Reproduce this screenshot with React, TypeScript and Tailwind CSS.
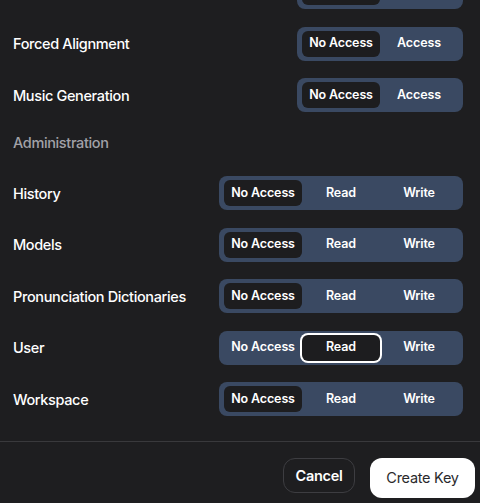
import { clsx } from 'clsx';

type Perm = {
  label: string;
  options: string[];
  selected: number;
  focused?: boolean;
};

const aiRows: Perm[] = [
  { label: 'Voice Isolation', options: ['No Access', 'Access'], selected: 0 },
  { label: 'Forced Alignment', options: ['No Access', 'Access'], selected: 0 },
  { label: 'Music Generation', options: ['No Access', 'Access'], selected: 0 },
];

const adminRows: Perm[] = [
  { label: 'History', options: ['No Access', 'Read', 'Write'], selected: 0 },
  { label: 'Models', options: ['No Access', 'Read', 'Write'], selected: 0 },
  { label: 'Pronunciation Dictionaries', options: ['No Access', 'Read', 'Write'], selected: 0 },
  { label: 'User', options: ['No Access', 'Read', 'Write'], selected: 1, focused: true },
  { label: 'Workspace', options: ['No Access', 'Read', 'Write'], selected: 0 },
];

function Segmented({ options, selected, focused }: Perm) {
  return (
    <div className="flex h-[34px] items-stretch rounded-lg bg-[#3a4962] px-[5px] py-1">
      {options.map((opt, i) => (
        <div
          key={opt}
          className={clsx(
            'flex w-[78px] items-center justify-center rounded-md text-[12.5px] font-semibold tracking-[-0.01em] text-white',
            i === selected && 'bg-[#1d1d1f]',
            i === selected && focused && 'ring-2 ring-white',
          )}
        >
          {opt}
        </div>
      ))}
    </div>
  );
}

function Row(p: Perm) {
  return (
    <div className="flex items-center justify-between">
      <span className="pt-px text-[14.5px] font-medium tracking-[-0.025em] text-white">{p.label}</span>
      <Segmented {...p} />
    </div>
  );
}

export default function App() {
  return (
    <div
      className="flex h-[503px] w-[480px] flex-col overflow-hidden bg-[#1e1e20]"
      style={{ fontFamily: 'Inter, "Liberation Sans", sans-serif' }}
    >
      {/* Scrolled permission list */}
      <div className="h-[441px] overflow-hidden pl-[13px] pr-[17px]">
        <div className="-mt-[25px] flex flex-col gap-[17.5px]">
          {aiRows.map((r) => (
            <Row key={r.label} {...r} />
          ))}
        </div>
        <div className="mb-[23px] mt-[21px] text-[14.5px] font-medium leading-[20px] tracking-[-0.025em] text-[#a2a2a8]">
          Administration
        </div>
        <div className="flex flex-col gap-[17.5px]">
          {adminRows.map((r) => (
            <Row key={r.label} {...r} />
          ))}
        </div>
      </div>

      {/* Footer */}
      <div className="flex flex-1 items-start justify-end gap-[15px] border-t border-[#39393c] pr-[5px] pt-4">
        <button className="h-[35px] w-[72px] rounded-xl border border-[#3d3d41] text-[14.5px] font-semibold tracking-[-0.02em] text-white">
          Cancel
        </button>
        <button className="h-[40px] w-[105px] rounded-xl bg-white text-[14.5px] tracking-[-0.02em] text-[#2a2a2c]">
          Create Key
        </button>
      </div>
    </div>
  );
}
